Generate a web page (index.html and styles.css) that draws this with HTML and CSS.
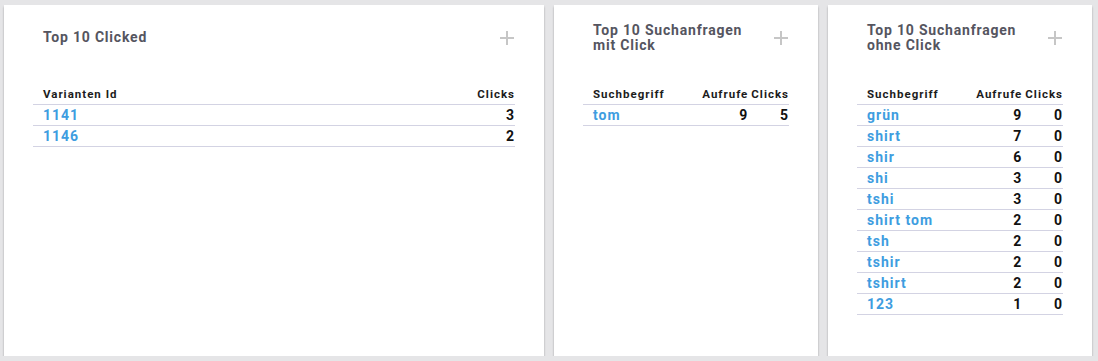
FILE: index.html
```html
<!DOCTYPE html>
<html lang="de">
<head>
  <meta charset="UTF-8" />
  <meta name="viewport" content="width=device-width, initial-scale=1" />
  <title>Suche - Statistik</title>
  <link rel="stylesheet" href="styles.css">
</head>
<body>

  <div class="widgets">

    <!-- Top 10 Clicked -->
    <div class="widget">
      <div class="widget-head">
        <h2 class="widget-title">Top 10 Clicked</h2>
        <span class="widget-add"></span>
      </div>
      <table class="stats">
        <thead>
          <tr><th>Varianten Id</th><th class="num">Clicks</th></tr>
        </thead>
        <tbody>
          <tr><td><a href="#">1141</a></td><td class="num">3</td></tr>
          <tr><td><a href="#">1146</a></td><td class="num">2</td></tr>
        </tbody>
      </table>
    </div>

    <!-- Suchanfragen mit Click -->
    <div class="widget">
      <div class="widget-head">
        <h2 class="widget-title">Top 10 Suchanfragen<br>mit Click</h2>
        <span class="widget-add"></span>
      </div>
      <table class="stats">
        <thead>
          <tr><th>Suchbegriff</th><th class="num">Aufrufe</th><th class="num">Clicks</th></tr>
        </thead>
        <tbody>
          <tr><td><a href="#">tom</a></td><td class="num">9</td><td class="num">5</td></tr>
        </tbody>
      </table>
    </div>

    <!-- Suchanfragen ohne Click -->
    <div class="widget">
      <div class="widget-head">
        <h2 class="widget-title">Top 10 Suchanfragen<br>ohne Click</h2>
        <span class="widget-add"></span>
      </div>
      <table class="stats">
        <thead>
          <tr><th>Suchbegriff</th><th class="num">Aufrufe</th><th class="num">Clicks</th></tr>
        </thead>
        <tbody>
          <tr><td><a href="#">grün</a></td><td class="num">9</td><td class="num">0</td></tr>
          <tr><td><a href="#">shirt</a></td><td class="num">7</td><td class="num">0</td></tr>
          <tr><td><a href="#">shir</a></td><td class="num">6</td><td class="num">0</td></tr>
          <tr><td><a href="#">shi</a></td><td class="num">3</td><td class="num">0</td></tr>
          <tr><td><a href="#">tshi</a></td><td class="num">3</td><td class="num">0</td></tr>
          <tr><td><a href="#">shirt tom</a></td><td class="num">2</td><td class="num">0</td></tr>
          <tr><td><a href="#">tsh</a></td><td class="num">2</td><td class="num">0</td></tr>
          <tr><td><a href="#">tshir</a></td><td class="num">2</td><td class="num">0</td></tr>
          <tr><td><a href="#">tshirt</a></td><td class="num">2</td><td class="num">0</td></tr>
          <tr><td><a href="#">123</a></td><td class="num">1</td><td class="num">0</td></tr>
        </tbody>
      </table>
    </div>

  </div>

</body>
</html>
```

FILE: styles.css
```css
body {
  margin: 0;
  padding: 5px 6px 0 4px;
  background-color: #e5e5e7;
  font-family: 'Roboto', 'Liberation Sans', sans-serif;
  color: #111;
}

.widgets {
  display: grid;
  grid-template-columns: 45fr 22fr 22fr;
  gap: 10px;
}

.widget {
  background-color: #fff;
  min-height: 351px;
  box-sizing: border-box;
  padding: 17px 29px 0 29px;
  box-shadow: 0 2px 2px rgba(0,0,0,0.3);
}

.widget-head {
  display: flex;
  align-items: center;
  justify-content: space-between;
  height: 31px;
  padding: 0 1px 0 10px;
  margin-bottom: 31px;
}

.widget-title {
  margin: 0;
  font-size: 14px;
  font-weight: bold;
  line-height: 15px;
  letter-spacing: 0.8px;
  color: #55555f;
}

/* plus zum Erweitern */
.widget-add {
  position: relative;
  width: 14px;
  height: 14px;
  flex-shrink: 0;
}

.widget-add::before,
.widget-add::after {
  content: '';
  position: absolute;
  background-color: #c6c6c6;
}

.widget-add::before {
  left: 0;
  right: 0;
  top: 6px;
  height: 2px;
}

.widget-add::after {
  top: 0;
  bottom: 0;
  left: 6px;
  width: 2px;
}

.stats {
  width: 100%;
  border-collapse: collapse;
}

.stats th,
.stats td {
  height: 20px;
  padding: 0 0 0 3px;
  border-bottom: 1px solid #d3d3e3;
  font-weight: bold;
  text-align: left;
  white-space: nowrap;
}

.stats th {
  font-size: 11.5px;
  letter-spacing: 1px;
  color: #1c1c1c;
}

.stats td {
  font-size: 14px;
  letter-spacing: 1px;
}

.stats th:first-child,
.stats td:first-child {
  width: 100%;
  padding-left: 10px;
}

.stats .num {
  text-align: right;
}

.stats a {
  color: #3e9de0;
  text-decoration: none;
}
```
